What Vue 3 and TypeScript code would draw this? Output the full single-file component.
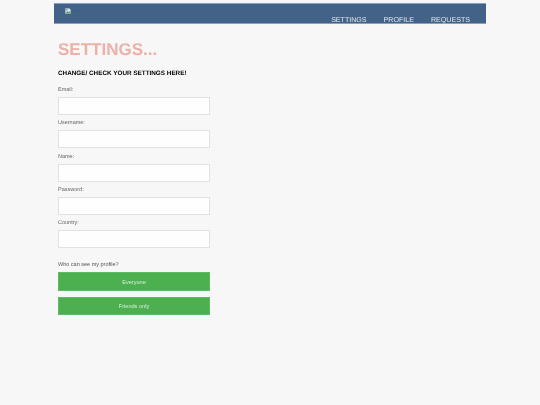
<script setup lang="ts">
const fields: string[] = ['Email:', 'Username:', 'Name:', 'Password:', 'Country:']
const links: string[] = ['SETTINGS', 'PROFILE', 'REQUESTS']
const choices: string[] = ['Everyone', 'Friends only']
</script>

<template>
  <div class="page">
    <header class="bar">
      <div class="logo">
        <svg width="6" height="6" viewBox="0 0 7 7" aria-hidden="true">
          <path d="M0.5 0.5H5L6.5 2V6.5H0.5Z" fill="#dfe6ee" stroke="#a9b4bf" stroke-width="0.6" />
          <path d="M1 6L3 3.5L4.5 5L6 3.5V6Z" fill="#5aa454" />
          <path d="M1.2 1.2H3V2.8H1.2Z" fill="#6f9fe0" />
        </svg>
        <span class="alt">logo</span>
      </div>
      <nav class="nav">
        <a v-for="link in links" :key="link" class="link">{{ link }}</a>
      </nav>
    </header>
    <main class="content">
      <h1 class="title">SETTINGS...</h1>
      <h2 class="sub">CHANGE/ CHECK YOUR SETTINGS HERE!</h2>
      <form class="form">
        <div v-for="f in fields" :key="f" class="field">
          <label class="label">{{ f }}</label>
          <input class="input" type="text" />
        </div>
        <p class="who">Who can see my profile?</p>
        <div class="choices">
          <button v-for="c in choices" :key="c" type="button" class="btn">{{ c }}</button>
        </div>
      </form>
    </main>
  </div>
</template>

<style>
html, body { margin: 0; background: #f7f7f7; }
</style>

<style scoped>
.page {
  width: 432px;
  height: 405px;
  margin-left: 54px;
  padding-top: 3px;
  box-sizing: border-box;
  font-family: "Liberation Sans", Arial, sans-serif;
  text-rendering: geometricPrecision;
  will-change: opacity;
  opacity: 0.999;
}
.bar {
  height: 21px;
  box-sizing: border-box;
  background: #426387;
  border-top: 1px solid #8aa0b8;
  border-bottom: 1px solid #8aa0b8;
  display: flex;
  justify-content: space-between;
  padding: 4px 16px 0 11px;
}
.logo { display: flex; align-items: flex-start; height: 8px; }
.logo svg { display: block; flex: none; }
.alt { font-size: 4px; line-height: 6px; color: #36608f; }
.nav { display: flex; gap: 17px; align-items: flex-end; }
.link { font-size: 7.1px; line-height: 6px; color: #e2e8ef; }
.content { padding: 0 0 0 4px; }
.title {
  margin: 0;
  padding-top: 15px;
  font-size: 17px;
  line-height: 22px;
  font-weight: 700;
  color: #ecb1a9;
}
.sub {
  margin: 0;
  padding-top: 9px;
  font-size: 6.35px;
  line-height: 8px;
  font-weight: 700;
  color: #000;
}
.form { width: 152px; padding-top: 8px; }
.field { height: 33.3px; }
.label { display: block; font-size: 5.5px; line-height: 8px; color: #666; height: 11px; }
.input {
  display: block;
  width: 152px;
  height: 18px;
  box-sizing: border-box;
  background: #fff;
  border: 1px solid #e2e2e2;
  padding: 0;
  margin: 0;
}
.who { margin: 0; padding-top: 9px; font-size: 5.5px; line-height: 8px; color: #555; }
.choices { display: flex; flex-direction: column; gap: 6px; padding-top: 3px; }
.btn {
  width: 152px;
  height: 18.5px;
  background: #4caf50;
  border: 1px solid #5fbb63;
  color: #d9efda;
  font-family: inherit;
  font-size: 5.6px;
  padding: 0;
  margin: 0;
}
</style>
